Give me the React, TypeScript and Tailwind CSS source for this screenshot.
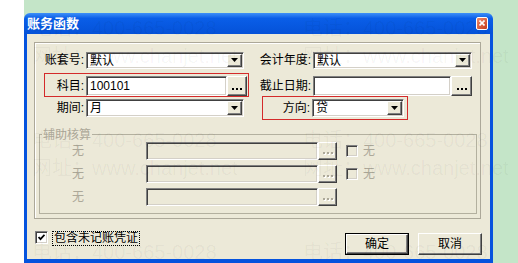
import React from 'react';

const font = 'font-["Liberation_Sans","Noto_Sans_CJK_SC",sans-serif]';
const sunken =
  'border border-t-[#808080] border-l-[#808080] border-b-white border-r-white shadow-[inset_1px_1px_0_#404040,inset_-1px_-1px_0_#d4d0c8]';
const raised =
  'border border-t-white border-l-white border-b-[#404040] border-r-[#404040] shadow-[inset_-1px_-1px_0_#808080] bg-[#ece9d8]';

function Arrow() {
  return (
    <div className={`flex h-full w-[15px] shrink-0 items-center justify-center ${raised}`}>
      <svg width="7" height="4" viewBox="0 0 7 4">
        <path d="M0 0h7L3.5 4z" fill="#000" />
      </svg>
    </div>
  );
}

function Combo({ value, w }: { value: string; w: string }) {
  return (
    <div className={`flex h-full ${w} bg-white p-[1px] ${sunken}`}>
      <span className="flex-1 pl-[2px] leading-[15px]">{value}</span>
      <Arrow />
    </div>
  );
}

function Dots({ disabled }: { disabled?: boolean }) {
  const c = disabled ? 'bg-[#aca899] shadow-[1px_1px_0_#fff]' : 'bg-black';
  return (
    <div className="flex gap-[2px]">
      <div className={`h-[2px] w-[2px] ${c}`} />
      <div className={`h-[2px] w-[2px] ${c}`} />
      <div className={`h-[2px] w-[2px] ${c}`} />
    </div>
  );
}

function DotButton({ w, disabled }: { w: string; disabled?: boolean }) {
  return (
    <div className={`flex h-full ${w} shrink-0 items-end justify-center pb-[5px] ${raised}`}>
      <Dots disabled={disabled} />
    </div>
  );
}

function AuxRow({ check }: { check?: boolean }) {
  return (
    <div className="flex h-[18px] items-center">
      <span className="w-[106px] pl-[32px] text-[#aca899]">无</span>
      <div className={`h-full w-[172px] bg-[#ece9d8] ${sunken}`} />
      <DotButton w="w-[19px]" disabled />
      {check && (
        <>
          <div className={`ml-[9px] h-[12px] w-[12px] bg-[#ece9d8] ${sunken}`} />
          <span className="ml-[5px] text-[#aca899]">无</span>
        </>
      )}
    </div>
  );
}

const marks = [
  { t: '电话：400-665-0028', x: 'left-[32px]', y: 'top-[18px]' },
  { t: '电话：400-665-0028', x: 'left-[303px]', y: 'top-[18px]' },
  { t: '网址：www.chanjet.net', x: 'left-[32px]', y: 'top-[46px]' },
  { t: '网址：www.chanjet.net', x: 'left-[303px]', y: 'top-[46px]' },
  { t: '电话：400-665-0028', x: 'left-[32px]', y: 'top-[130px]' },
  { t: '电话：400-665-0028', x: 'left-[303px]', y: 'top-[130px]' },
  { t: '网址：www.chanjet.net', x: 'left-[32px]', y: 'top-[158px]' },
  { t: '网址：www.chanjet.net', x: 'left-[303px]', y: 'top-[158px]' },
  { t: '电话：400-665-0028', x: 'left-[32px]', y: 'top-[242px]' },
  { t: '电话：400-665-0028', x: 'left-[303px]', y: 'top-[242px]' },
];

export default function App() {
  return (
    <div className={`relative flex h-[263px] w-[518px] overflow-hidden bg-[#c4e5c8] text-[12px] text-black ${font}`}>
      <div className="w-[24px] shrink-0 bg-white" />
      <div className="mt-[13px] flex w-[469px] shrink-0 flex-col overflow-hidden rounded-t-[6px]">
        {/* title bar */}
        <div className="flex h-[21px] items-center bg-linear-to-b from-[#3d8ff8] via-[#0a5ee8] via-25% to-[#0552d8] pl-[3px] pr-[5px]">
          <span className="text-[13px] font-bold leading-none text-white">账务函数</span>
          <div className="ml-auto flex h-[13px] w-[12px] items-center justify-center rounded-[2px] border border-white bg-linear-to-br from-[#f08a6a] to-[#c83a18]">
            <svg width="6" height="6" viewBox="0 0 6 6">
              <path d="M0.5 0.5l5 5M5.5 0.5l-5 5" stroke="#fff" strokeWidth="1.6" />
            </svg>
          </div>
        </div>

        {/* body */}
        <div className="flex h-[230px] flex-col border-x-[3px] border-b-[4px] border-[#0553de] bg-[#ece9d8] pl-[7px] pt-[8px]">
          <div className="relative h-[177px] w-[447px] border border-[#aca899] shadow-[inset_1px_1px_0_#fff]">
            <div className="pt-[9px]">
              <div className="flex h-[17px] items-center">
                <span className="w-[51px] pr-[2px] text-right">账套号:</span>
                <Combo value="默认" w="w-[158px]" />
                <span className="w-[69px] pr-[2px] text-right">会计年度:</span>
                <Combo value="默认" w="w-[159px]" />
              </div>
              <div className="mt-[7px] flex h-[20px] items-center">
                <span className="w-[51px] pr-[2px] text-right">科目:</span>
                <div className={`h-full w-[141px] bg-white pl-[3px] leading-[18px] ${sunken}`}>100101</div>
                <DotButton w="w-[20px]" />
                <span className="w-[66px] pr-[2px] text-right">截止日期:</span>
                <div className={`h-full w-[138px] bg-white ${sunken}`} />
                <DotButton w="w-[21px]" />
              </div>
              <div className="mt-[3px] flex h-[18px] items-center">
                <span className="w-[51px] pr-[2px] text-right">期间:</span>
                <Combo value="月" w="w-[158px]" />
                <span className="w-[68px] pr-[2px] text-right">方向:</span>
                <Combo value="贷" w="w-[92px]" />
              </div>
            </div>

            <fieldset className="ml-[4px] mt-[11px] h-[86px] w-[438px] border border-[#b3b09f]">
              <legend className="ml-[2px] px-[1px] leading-[14px] text-[#aca899]">辅助核算</legend>
              <div className="flex flex-col gap-[5px]">
                <AuxRow check />
                <AuxRow check />
                <AuxRow />
              </div>
            </fieldset>

            {/* annotation boxes */}
            <div className="absolute left-[9px] top-[30px] h-[24px] w-[205px] border border-[#d42a2a]" />
            <div className="absolute left-[227px] top-[53px] h-[24px] w-[146px] border border-[#d42a2a]" />
          </div>

          <div className="mt-[12px] flex items-start pl-[1px] pr-[8px]">
            <div className={`flex h-[13px] w-[13px] items-center justify-center bg-white ${sunken}`}>
              <svg width="7" height="7" viewBox="0 0 7 7">
                <path d="M0.5 3l2 2.2L6.5 0.8" stroke="#000" strokeWidth="1.8" fill="none" />
              </svg>
            </div>
            <span className="ml-[4px] border border-dotted border-black px-[1px] leading-[13px]">包含未记账凭证</span>
            <div className="ml-auto mt-[2px] flex gap-[9px]">
              <div className="h-[22px] w-[64px] border border-black">
                <div className={`flex h-full items-center justify-center ${raised}`}>确定</div>
              </div>
              <div className={`flex h-[22px] w-[64px] items-center justify-center ${raised}`}>取消</div>
            </div>
          </div>
        </div>
      </div>

      {/* watermark */}
      <div className="pointer-events-none absolute inset-0">
        {marks.map((m, i) => (
          <span key={i} className={`absolute ${m.x} ${m.y} whitespace-nowrap text-[20px] leading-none text-black/[0.045]`}>
            {m.t}
          </span>
        ))}
      </div>
    </div>
  );
}
